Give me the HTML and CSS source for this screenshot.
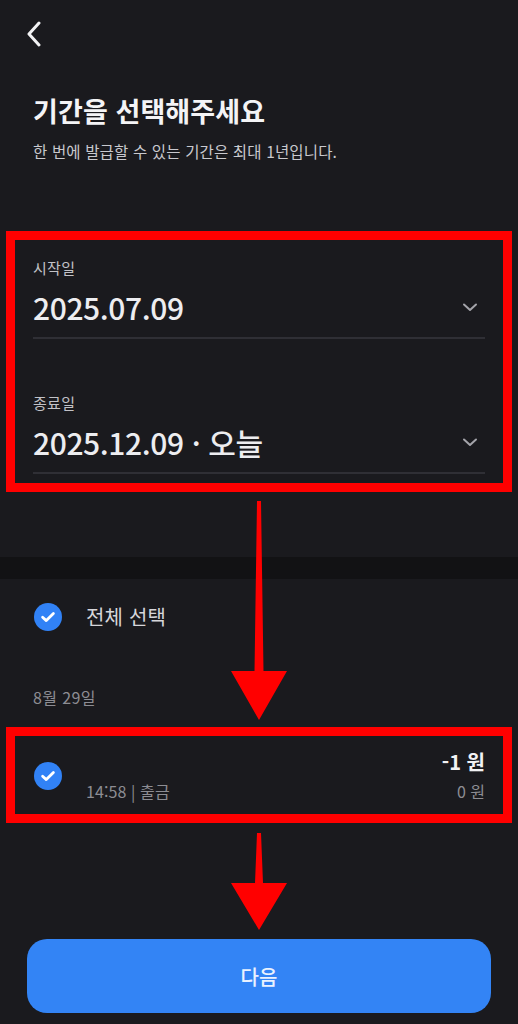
FILE: index.html
```html
<!DOCTYPE html>
<html lang="ko">
<head>
<meta charset="utf-8">
<link rel="stylesheet" href="styles.css">
</head>
<body>
<div class="screen">
  <header class="topbar">
    <svg class="back" width="16" height="26" viewBox="0 0 16 26"><path d="M13 2 L3 13 L13 24" fill="none" stroke="#f2f2f4" stroke-width="3" stroke-linecap="round" stroke-linejoin="round"/></svg>
  </header>

  <section class="intro">
    <h1 class="title">기간을 선택해주세요</h1>
    <p class="subtitle">한 번에 발급할 수 있는 기간은 최대 1년입니다.</p>
  </section>

  <section class="dates">
    <div class="field">
      <div class="label">시작일</div>
      <div class="value-row">
        <span class="value">2025.07.09</span>
        <svg class="chev" width="24" height="24" viewBox="0 0 24 24"><path d="M6 9.5 L12 15 L18 9.5" fill="none" stroke="#a4a4aa" stroke-width="2" stroke-linecap="round" stroke-linejoin="round"/></svg>
      </div>
    </div>
    <div class="field field-2">
      <div class="label">종료일</div>
      <div class="value-row">
        <span class="value">2025.12.09 · 오늘</span>
        <svg class="chev" width="24" height="24" viewBox="0 0 24 24"><path d="M6 9.5 L12 15 L18 9.5" fill="none" stroke="#a4a4aa" stroke-width="2" stroke-linecap="round" stroke-linejoin="round"/></svg>
      </div>
    </div>
  </section>

  <div class="band"></div>

  <section class="list">
    <div class="select-all">
      <span class="check"><svg width="28" height="28" viewBox="0 0 28 28"><circle cx="14" cy="14" r="14" fill="#3182f6"/><path d="M8.6 14.2 L12.3 17.6 L19.4 10.6" fill="none" stroke="#fff" stroke-width="2.8" stroke-linecap="round" stroke-linejoin="round"/></svg></span>
      <span class="select-text">전체 선택</span>
    </div>
    <div class="date-head">8월 29일</div>
    <div class="tx">
      <span class="check"><svg width="28" height="28" viewBox="0 0 28 28"><circle cx="14" cy="14" r="14" fill="#3182f6"/><path d="M8.6 14.2 L12.3 17.6 L19.4 10.6" fill="none" stroke="#fff" stroke-width="2.8" stroke-linecap="round" stroke-linejoin="round"/></svg></span>
      <div class="tx-body">
        <span class="tx-name"></span>
        <span class="tx-amount">-1 원</span>
        <span class="tx-meta">14:58 | 출금</span>
        <span class="tx-balance">0 원</span>
      </div>
    </div>
  </section>

  <div class="footer">
    <button class="next">다음</button>
  </div>

  <div class="mark mark-dates"></div>
  <div class="mark mark-tx"></div>
  <svg class="arrow arrow-1" width="58" height="222" viewBox="0 0 58 222"><polygon points="27,2 31,2 33.5,172 57,172 29,221 1,172 24.5,172" fill="#ff0000"/></svg>
  <svg class="arrow arrow-2" width="58" height="100" viewBox="0 0 58 100"><polygon points="27,1 31,1 33,51 57,51 29,98 1,51 25,51" fill="#ff0000"/></svg>
</div>
</body>
</html>
```

FILE: styles.css
```css
* { box-sizing: border-box; }
html, body { margin: 0; padding: 0; background: #0c0c0e; }
body { font-family: "Noto Sans CJK KR", "Noto Sans", sans-serif; }

.screen {
  position: relative;
  width: 518px;
  height: 1024px;
  background: #1a1a1e;
  display: flex;
  flex-direction: column;
  overflow: hidden;
  color: #f2f2f4;
}

.topbar { height: 68px; padding: 21px 0 0 26px; }
.back { display: block; }

.intro { padding: 0 33px; margin-top: 25px; }
.title {
  margin: 0;
  font-size: 27px;
  line-height: 35px;
  font-weight: 700;
  letter-spacing: 0.1px;
  color: #f4f4f6;
}
.subtitle {
  margin: 12px 0 0;
  font-size: 15.5px;
  line-height: 22px;
  color: #c9c9ce;
  letter-spacing: 0.15px;
}

.dates { padding: 96px 33px 83px; }
.field { border-bottom: 2px solid #2f2f35; padding-bottom: 10px; }
.field-2 { margin-top: 54px; }
.label { font-size: 15px; line-height: 20px; color: #c2c2c7; letter-spacing: 0.3px; }
.value-row {
  margin-top: 9px;
  display: flex;
  justify-content: space-between;
  align-items: center;
}
.value {
  font-size: 30px;
  line-height: 40px;
  font-weight: 500;
  color: #ededf0;
  letter-spacing: -0.4px;
}
.chev { display: block; margin-right: 3px; }

.band { height: 22px; background: #121214; }

.list { padding: 24px 33px 0 34px; }
.select-all { display: flex; align-items: center; gap: 24px; }
.check { display: block; width: 28px; height: 28px; }
.check svg { display: block; }
.select-text { font-size: 20px; line-height: 28px; color: #d6d6da; letter-spacing: 0.2px; }

.date-head { margin-top: 56px; font-size: 16px; line-height: 20px; color: #8d8d93; margin-left: -1px; letter-spacing: 0.4px; }

.tx { margin-top: 43px; display: flex; align-items: center; gap: 24px; }
.tx-body {
  flex: 1;
  display: grid;
  grid-template-columns: 1fr auto;
  row-gap: 7px;
}
.tx-amount {
  font-size: 20px;
  line-height: 24px;
  font-weight: 700;
  color: #f2f2f4;
  text-align: right;
}
.tx-meta, .tx-balance { font-size: 16px; line-height: 20px; color: #8d8d93; }
.tx-balance { text-align: right; }
.tx-meta { letter-spacing: 0.1px; }

.footer { margin-top: auto; padding: 0 27px 11px; }
.next {
  display: block;
  width: 100%;
  height: 74px;
  border: 0;
  border-radius: 20px;
  background: #3384f5;
  color: #eaf2ff;
  font-family: "Noto Sans CJK KR", "Noto Sans", sans-serif;
  font-size: 20px;
  font-weight: 500;
}

/* annotation overlays */
.mark { position: absolute; border: 9px solid #ff0000; }
.mark-dates { left: 6px; top: 231px; width: 506px; height: 261px; }
.mark-tx { left: 6px; top: 727px; width: 506px; height: 96px; }
.arrow { position: absolute; display: block; }
.arrow-1 { left: 230px; top: 499px; }
.arrow-2 { left: 230px; top: 832px; }
```
